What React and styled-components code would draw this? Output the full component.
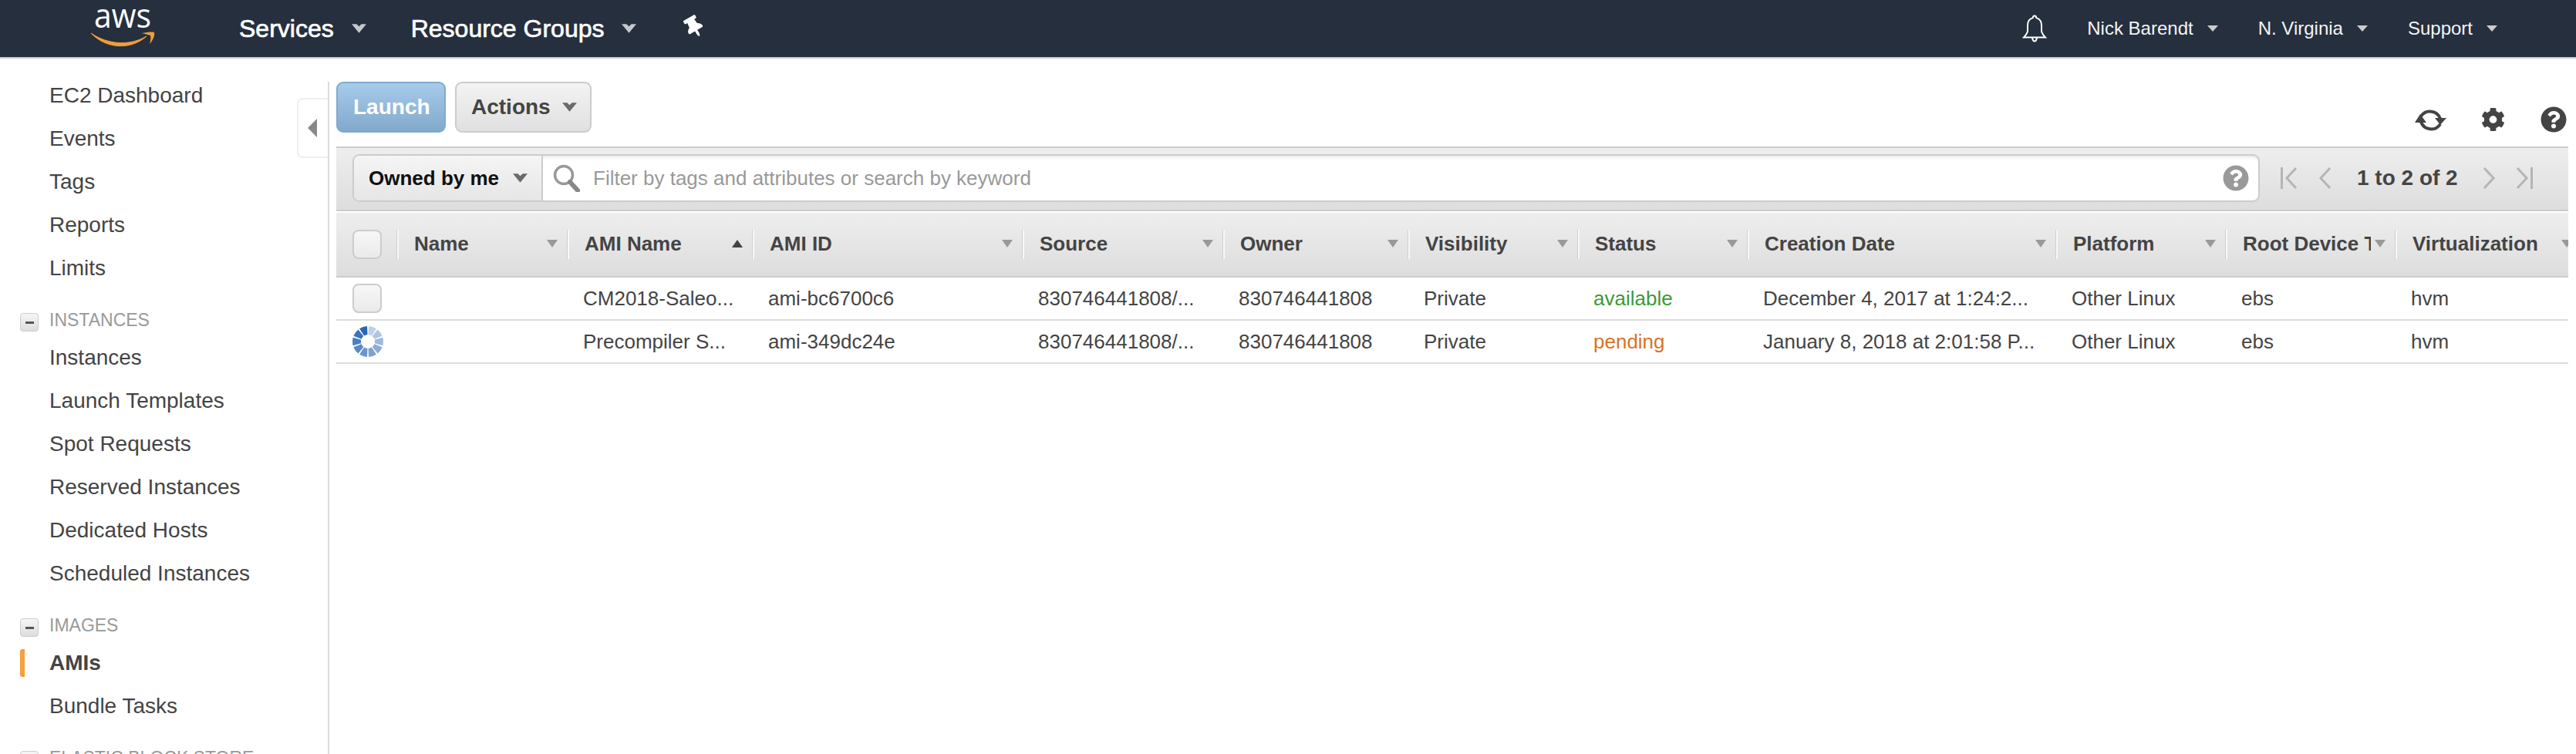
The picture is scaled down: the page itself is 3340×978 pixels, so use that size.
import React from "react";
import styled, { createGlobalStyle } from "styled-components";
import { FaCog, FaQuestionCircle, FaThumbtack } from "react-icons/fa";

const GlobalStyle = createGlobalStyle`
  html, body {
    margin: 0;
    padding: 0;
    height: 100%;
    overflow: hidden;
    background: #fff;
    font-family: "Liberation Sans", Arial, sans-serif;
    color: #444;
  }
`;

const sideSections = [
  { items: ["EC2 Dashboard", "Events", "Tags", "Reports", "Limits"] },
  {
    title: "INSTANCES",
    items: [
      "Instances",
      "Launch Templates",
      "Spot Requests",
      "Reserved Instances",
      "Dedicated Hosts",
      "Scheduled Instances",
    ],
  },
  { title: "IMAGES", items: ["AMIs", "Bundle Tasks"] },
  { title: "ELASTIC BLOCK STORE", items: [] },
];

const columns = [
  { label: "Name" },
  { label: "AMI Name", sorted: true },
  { label: "AMI ID" },
  { label: "Source" },
  { label: "Owner" },
  { label: "Visibility" },
  { label: "Status" },
  { label: "Creation Date" },
  { label: "Platform" },
  { label: "Root Device Type" },
  { label: "Virtualization" },
];

const rows = [
  {
    id: "ami-bc6700c6",
    name: "CM2018-Saleo...",
    status: "available",
    date: "December 4, 2017 at 1:24:2...",
  },
  {
    id: "ami-349dc24e",
    name: "Precompiler S...",
    status: "pending",
    date: "January 8, 2018 at 2:01:58 P...",
    busy: true,
  },
];

const gridColumns = "79px 221px 240px 350px 260px 240px 220px 220px 400px 220px 220px 242px";

const Page = styled.div`
  width: 3340px;
  height: 978px;
  overflow: hidden;
`;

const TopBar = styled.header`
  height: 74px;
  display: flex;
  align-items: center;
  background: #252f3e;
  border-bottom: 2px solid #ccc;
  padding: 0 102px 0 118px;
`;

const Logo = styled.svg`
  width: 84px;
  height: 50px;
  flex: none;
  margin: 0 108px 3px 0;
`;

const MainNav = styled.nav`
  display: flex;
  align-items: center;
`;

const MainNavItem = styled.div`
  display: flex;
  align-items: center;
  gap: 23px;
  margin-right: 58px;
  font-size: 32px;
  color: #fff;
  -webkit-text-stroke: 0.7px #fff;
  white-space: nowrap;
`;

const PinIcon = styled(FaThumbtack)`
  width: 22px;
  height: 28px;
  margin: 0 0 4px 6px;
  color: #fff;
  transform: rotate(-30deg);
`;

const UserNav = styled.nav`
  display: flex;
  align-items: center;
  gap: 52px;
  margin-left: auto;
`;

const BellIcon = styled.svg`
  width: 32px;
  height: 36px;
  flex: none;
`;

const UserNavItem = styled.div`
  display: flex;
  align-items: center;
  gap: 18px;
  font-size: 24px;
  color: #f4f4f4;
  white-space: nowrap;
`;

const Triangle = styled.span`
  width: 0;
  height: 0;
  flex: none;
  border-left: ${(p) => p.$size}px solid transparent;
  border-right: ${(p) => p.$size}px solid transparent;
  border-top: ${(p) => (p.$up ? "none" : `${p.$depth}px solid ${p.$color}`)};
  border-bottom: ${(p) => (p.$up ? `${p.$depth}px solid ${p.$color}` : "none")};
`;

const Chevron = styled.svg`
  width: 19px;
  height: 12px;
  flex: none;
`;

const Body = styled.div`
  display: flex;
  height: 902px;
`;

const Sidebar = styled.aside`
  width: 425px;
  flex: none;
  padding-top: 20px;
  box-sizing: border-box;
`;

const SideTitle = styled.div`
  display: flex;
  align-items: center;
  height: 30px;
  margin: 24px 0 6px 26px;
  font-size: 23px;
  color: #999;
  white-space: nowrap;
`;

const Collapse = styled.span`
  width: 24px;
  height: 24px;
  flex: none;
  display: flex;
  align-items: center;
  justify-content: center;
  box-sizing: border-box;
  margin: 6px 14px 0 0;
  border: 1px solid #ccc;
  border-radius: 4px;
  background: linear-gradient(#f6f6f6, #ddd);

  &::before {
    content: "";
    width: 11px;
    height: 3px;
    background: #555;
  }
`;

const SideItem = styled.div`
  position: relative;
  height: 56px;
  line-height: 56px;
  padding-left: 64px;
  font-size: 28px;
  font-weight: ${(p) => (p.$active ? "bold" : "normal")};
  color: #444;

  &::before {
    content: "";
    display: ${(p) => (p.$active ? "block" : "none")};
    position: absolute;
    left: 26px;
    top: 10px;
    width: 6px;
    height: 36px;
    border-radius: 3px 0 0 3px;
    background: #f79f3a;
  }
`;

const Rail = styled.div`
  position: relative;
  width: 2px;
  flex: none;
  margin-top: 30px;
  background: #ddd;
`;

const RailTab = styled.div`
  position: absolute;
  top: 21px;
  left: -40px;
  width: 40px;
  height: 78px;
  display: flex;
  align-items: center;
  justify-content: center;
  box-sizing: border-box;
  background: #fff;
  border: 2px solid #eee;
  border-right: none;
  border-radius: 8px 0 0 8px;

  &::before {
    content: "";
    width: 0;
    height: 0;
    margin-right: 2px;
    border-top: 12px solid transparent;
    border-bottom: 12px solid transparent;
    border-right: 12px solid #888;
  }
`;

const Main = styled.main`
  width: 2894px;
  flex: none;
  margin-left: 9px;
  padding-top: 30px;
  overflow: hidden;
`;

const Toolbar = styled.div`
  display: flex;
  gap: 12px;
  height: 66px;
  margin-bottom: 18px;
`;

const Button = styled.button`
  width: ${(p) => p.$width}px;
  height: 66px;
  display: flex;
  align-items: center;
  gap: 15px;
  box-sizing: border-box;
  padding: 0 0 0 ${(p) => (p.$primary ? 20 : 19)}px;
  border: 2px solid ${(p) => (p.$primary ? "#7faacf" : "#ccc")};
  border-radius: 9px;
  background: ${(p) =>
    p.$primary
      ? "linear-gradient(#a6cbeb, #82a9cb)"
      : "linear-gradient(#f3f3f3, #e0e0e0)"};
  color: ${(p) => (p.$primary ? "#fff" : "#444")};
  font: bold 28px "Liberation Sans", Arial, sans-serif;
`;

const ToolIcons = styled.div`
  display: flex;
  align-items: flex-end;
  margin-left: auto;
  padding-right: 2px;
  color: #444;
`;

const RefreshIcon = styled.svg`
  width: 41px;
  height: 33px;
  flex: none;
  margin-right: 45px;
`;

const GearIcon = styled(FaCog)`
  width: 31px;
  height: 34px;
  margin-right: 46px;
`;

const HelpIcon = styled(FaQuestionCircle)`
  width: ${(p) => p.$size}px;
  height: ${(p) => p.$size}px;
  flex: none;
`;

const FilterBar = styled.div`
  height: 84px;
  display: flex;
  align-items: flex-start;
  box-sizing: border-box;
  padding: 8px 0 0 21px;
  border-top: 2px solid #ccc;
  border-bottom: 2px solid #ccc;
  background: linear-gradient(#eee, #ddd);
`;

const Search = styled.div`
  width: 2473px;
  height: 62px;
  flex: none;
  display: flex;
  box-sizing: border-box;
  border: 2px solid #ccc;
  border-radius: 9px;
  background: #fff;
  box-shadow: inset 0 4px 4px -2px #e8e8e8;
  overflow: hidden;
`;

const OwnerSelect = styled.div`
  width: 245px;
  flex: none;
  display: flex;
  align-items: center;
  gap: 18px;
  box-sizing: border-box;
  padding-left: 19px;
  border-right: 2px solid #ccc;
  background: linear-gradient(#f5f5f5, #e6e6e6);
  font-size: 26px;
  font-weight: bold;
  color: #111;
  white-space: nowrap;
`;

const SearchGlass = styled.svg`
  width: 36px;
  height: 36px;
  flex: none;
  align-self: center;
  margin-left: 13px;
`;

const Placeholder = styled.div`
  flex: 1;
  align-self: center;
  margin-left: 16px;
  font-size: 26px;
  color: #999;
  white-space: nowrap;
`;

const SearchHelp = styled(HelpIcon)`
  align-self: center;
  margin-right: 12px;
  color: #999;
`;

const Pager = styled.div`
  display: flex;
  align-items: center;
  height: 62px;
  margin-left: 27px;
`;

const PagerIcon = styled.svg`
  width: ${(p) => p.$width}px;
  height: 30px;
  flex: none;
  margin-right: ${(p) => p.$gap}px;
`;

const PagerText = styled.div`
  margin-right: 32px;
  font-size: 28px;
  font-weight: bold;
  color: #444;
  white-space: nowrap;
`;

const Table = styled.div`
  margin-top: 2px;
  overflow: hidden;
`;

const HeaderRow = styled.div`
  display: grid;
  grid-template-columns: ${gridColumns};
  align-items: center;
  height: 84px;
  box-sizing: border-box;
  border-bottom: 2px solid #ccc;
  background: linear-gradient(#eee, #ddd);
`;

const CheckCell = styled.div`
  display: flex;
  align-items: center;
  padding-left: 21px;
`;

const CheckBox = styled.span`
  width: 38px;
  height: 38px;
  box-sizing: border-box;
  border: 2px solid #ccc;
  border-radius: 8px;
  background: linear-gradient(#f7f7f7, #eaeaea);
`;

const HeaderCell = styled.div`
  height: 38px;
  min-width: 0;
  display: flex;
  align-items: center;
  gap: 5px;
  box-sizing: border-box;
  padding: 0 13px 2px 20px;
  border-left: 2px solid #f8f8f8;
  box-shadow: -1px 0 0 #cfcfcf;
  font-size: 26px;
  font-weight: bold;
  color: #444;
`;

const HeaderLabel = styled.span`
  flex: 1;
  min-width: 0;
  overflow: hidden;
  white-space: nowrap;
`;

const Row = styled.div`
  display: grid;
  grid-template-columns: ${gridColumns};
  align-items: center;
  height: 56px;
  box-sizing: border-box;
  border-bottom: 2px solid #ddd;
`;

const Cell = styled.div`
  padding-left: 20px;
  font-size: 26px;
  color: #444;
  white-space: nowrap;
  overflow: hidden;
`;

const StatusCell = styled(Cell)`
  color: ${(p) => (p.$status === "available" ? "#3b9b35" : "#d9731f")};
`;

const SpinnerIcon = styled.svg`
  width: 40px;
  height: 40px;
`;

const ChevronDown = ({ color }) => (
  <Chevron viewBox="0 0 18 11">
    <path d="M0 0h6l3 3 3-3h6L9 11z" fill={color} />
  </Chevron>
);

const Spinner = () => (
  <SpinnerIcon viewBox="0 0 40 40">
    {Array.from({ length: 10 }).map((_, i) => (
      <path
        key={i}
        d="M14.800 .7A20 20 0 0 1 25.200 .7L22.300 11.300A9 9 0 0 0 17.700 11.300Z"
        fill="#2a66b5"
        opacity={0.3 + (i * 0.7) / 9}
        transform={`rotate(${18 + i * 36} 20 20)`}
      />
    ))}
  </SpinnerIcon>
);

const Pagers = () => (
  <Pager>
    <PagerIcon $width={22} $gap={27} viewBox="0 0 22 30">
      <path d="M1.500 1v28M20 2 8 15l12 13" fill="none" stroke="#b5b5b5" strokeWidth="3" />
    </PagerIcon>
    <PagerIcon $width={17} $gap={33} viewBox="0 0 17 30">
      <path d="M15 2 3 15l12 13" fill="none" stroke="#b5b5b5" strokeWidth="3" />
    </PagerIcon>
    <PagerText>1 to 2 of 2</PagerText>
    <PagerIcon $width={17} $gap={26} viewBox="0 0 17 30">
      <path d="M2 2l12 13L2 28" fill="none" stroke="#b5b5b5" strokeWidth="3" />
    </PagerIcon>
    <PagerIcon $width={22} $gap={0} viewBox="0 0 22 30">
      <path d="M20.500 1v28M2 2l12 13L2 28" fill="none" stroke="#b5b5b5" strokeWidth="3" />
    </PagerIcon>
  </Pager>
);

export default function App() {
  return (
    <Page>
      <GlobalStyle />
      <TopBar>
        <Logo viewBox="0 0 84 50">
          <text
            x="4"
            y="25"
            fill="#fff"
            fontFamily="Open Sans, Liberation Sans, sans-serif"
            fontSize="44"
            textLength="74"
            lengthAdjust="spacingAndGlyphs"
          >
            aws
          </text>
          <path d="M0 32c22 15 50 17 72 4-20 18-52 17-72-4z" fill="#f19e38" stroke="#f19e38" strokeWidth="1" />
          <path d="M66 32c6-1 12-2 16-1 1 4-2 11-6 15 1-4 2-8 1-11-3-1-7-2-11-3z" fill="#f19e38" />
        </Logo>
        <MainNav>
          <MainNavItem>
            Services
            <ChevronDown color="#c4c7cc" />
          </MainNavItem>
          <MainNavItem>
            Resource Groups
            <ChevronDown color="#c4c7cc" />
          </MainNavItem>
          <PinIcon />
        </MainNav>
        <UserNav>
          <BellIcon viewBox="0 0 32 36">
            <path
              d="M16 1.500c1.500 0 2.200 1 2.200 2.600C23 5.400 25 9 25 14v7c0 3 2.500 5.500 5 8.500H2c2.500-3 5-5.500 5-8.500v-7c0-5 2-8.600 6.800-9.900C13.800 2.500 14.500 1.500 16 1.500zM13 30c.5 2.800 1.500 4.500 3 4.500s2.500-1.700 3-4.500"
              fill="none"
              stroke="#fff"
              strokeWidth="2"
            />
          </BellIcon>
          <UserNavItem>
            Nick Barendt
            <Triangle $size={7} $depth={8} $color="#ccc" />
          </UserNavItem>
          <UserNavItem>
            N. Virginia
            <Triangle $size={7} $depth={8} $color="#ccc" />
          </UserNavItem>
          <UserNavItem>
            Support
            <Triangle $size={7} $depth={8} $color="#ccc" />
          </UserNavItem>
        </UserNav>
      </TopBar>
      <Body>
        <Sidebar>
          {sideSections.map((section) => (
            <div key={section.title || "top"}>
              {section.title && (
                <SideTitle>
                  <Collapse />
                  {section.title}
                </SideTitle>
              )}
              {section.items.map((item) => (
                <SideItem key={item} $active={item === "AMIs"}>
                  {item}
                </SideItem>
              ))}
            </div>
          ))}
        </Sidebar>
        <Rail>
          <RailTab />
        </Rail>
        <Main>
          <Toolbar>
            <Button $primary $width={142}>
              Launch
            </Button>
            <Button $width={177}>
              Actions
              <ChevronDown color="#6a6a6a" />
            </Button>
            <ToolIcons>
              <RefreshIcon viewBox="0 0 41 33">
                <path d="M8 12A14 14 0 0 1 33 15M33 22A14 14 0 0 1 8 19" fill="none" stroke="#444" strokeWidth="4" />
                <path d="M26 14h15l-8 9zM0 20h15L7 9z" fill="#444" />
              </RefreshIcon>
              <GearIcon />
              <HelpIcon $size={34} />
            </ToolIcons>
          </Toolbar>
          <FilterBar>
            <Search>
              <OwnerSelect>
                Owned by me
                <ChevronDown color="#6a6a6a" />
              </OwnerSelect>
              <SearchGlass viewBox="0 0 36 36">
                <circle cx="14" cy="14" r="11.500" fill="none" stroke="#999" strokeWidth="3.500" />
                <path d="M22 23l10 11" stroke="#888" strokeWidth="6" strokeLinecap="round" />
              </SearchGlass>
              <Placeholder>Filter by tags and attributes or search by keyword</Placeholder>
              <SearchHelp $size={34} />
            </Search>
            <Pagers />
          </FilterBar>
          <Table>
            <HeaderRow>
              <CheckCell>
                <CheckBox />
              </CheckCell>
              {columns.map((col) => (
                <HeaderCell key={col.label}>
                  <HeaderLabel>{col.label}</HeaderLabel>
                  <Triangle
                    $size={7}
                    $depth={10}
                    $up={col.sorted}
                    $color={col.sorted ? "#444" : "#999"}
                  />
                </HeaderCell>
              ))}
            </HeaderRow>
            {rows.map((row) => (
              <Row key={row.id}>
                <CheckCell>{row.busy ? <Spinner /> : <CheckBox />}</CheckCell>
                <Cell />
                <Cell>{row.name}</Cell>
                <Cell>{row.id}</Cell>
                <Cell>830746441808/...</Cell>
                <Cell>830746441808</Cell>
                <Cell>Private</Cell>
                <StatusCell $status={row.status}>{row.status}</StatusCell>
                <Cell>{row.date}</Cell>
                <Cell>Other Linux</Cell>
                <Cell>ebs</Cell>
                <Cell>hvm</Cell>
              </Row>
            ))}
          </Table>
        </Main>
      </Body>
    </Page>
  );
}
